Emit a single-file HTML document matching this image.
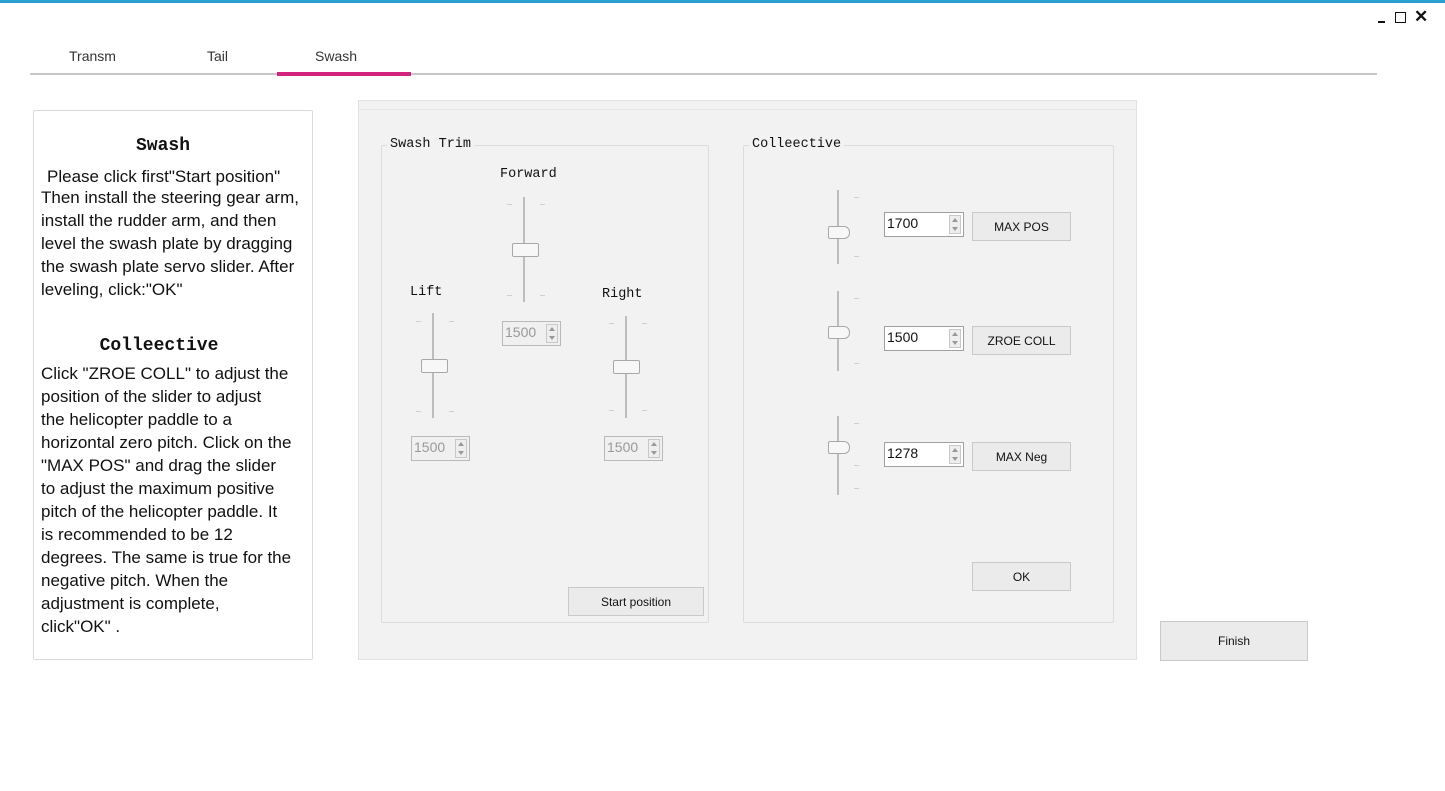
<!DOCTYPE html>
<html><head><style>
*{margin:0;padding:0;box-sizing:border-box}
body{width:1445px;height:791px;background:#fff;position:relative;overflow:hidden;font-family:"Liberation Sans",sans-serif}
.a{position:absolute}
.t{position:absolute;white-space:nowrap;font-size:17px;color:#111;left:41px}
.mono{font-family:"Liberation Mono",monospace;color:#111}
.grp{position:absolute;border:1px solid #dcdcdc;border-radius:2px}
.glbl{position:absolute;background:#f2f2f2;padding:0 3px;font-size:13.5px;top:-9px;left:5px}
.trk{position:absolute;width:2px;background:#bdbdbd}
.hnd{position:absolute;background:#f7f7f7;border:1px solid #a8a8a8;border-radius:2px}
.tick{position:absolute;width:5px;height:1px;background:#cfcfcf}
.spin{position:absolute;border:1px solid #b9b9b9;background:#f0f0f0;font-size:14px;color:#999;padding:2px 0 0 2px}
.spin.en{background:#fff;color:#111;border-color:#a0a0a0}
.arr{position:absolute;right:2px;top:2px;width:12px;bottom:2px;border:1px solid #c8c8c8;background:#eee}
.arr:before{content:"";position:absolute;left:2px;top:2px;border:3.5px solid transparent;border-bottom:4px solid #999;border-top:0}
.arr:after{content:"";position:absolute;left:2px;bottom:2px;border:3.5px solid transparent;border-top:4px solid #999;border-bottom:0}
.btn{position:absolute;background:#ebebeb;border:1px solid #c9c9c9;font-size:12px;color:#111;display:flex;align-items:center;justify-content:center}
</style></head><body>
<div class="a" style="left:0;top:0;width:1445px;height:3px;background:#2b9fd1"></div>
<div class="a" style="left:1378px;top:21px;width:7px;height:2px;background:#111"></div>
<div class="a" style="left:1395px;top:12px;width:11px;height:11px;border:1.5px solid #111"></div>
<div class="a" style="left:1414px;top:7px;font-size:17px;font-weight:bold;color:#111">✕</div>

<div class="a" style="left:69px;top:48px;font-size:14px;color:#333">Transm</div>
<div class="a" style="left:207px;top:48px;font-size:14px;color:#333">Tail</div>
<div class="a" style="left:315px;top:48px;font-size:14px;color:#333">Swash</div>
<div class="a" style="left:30px;top:73px;width:1347px;height:2px;background:#c8c8c8"></div>
<div class="a" style="left:277px;top:72px;width:134px;height:4px;background:#d3237f"></div>

<div class="a" style="left:33px;top:110px;width:280px;height:550px;border:1px solid #dadada;border-radius:2px"></div>
<div class="a mono" style="left:33px;width:260px;top:136px;text-align:center;font-size:18px;font-weight:bold">Swash</div>
<div class="t" style="top:167px;left:47px">Please click first"Start position"</div>
<div class="t" style="top:188px">Then install the steering gear arm,</div>
<div class="t" style="top:211px">install the rudder arm, and then</div>
<div class="t" style="top:234px">level the swash plate by dragging</div>
<div class="t" style="top:257px">the swash plate servo slider. After</div>
<div class="t" style="top:280px">leveling, click:"OK"</div>
<div class="a mono" style="left:33px;width:252px;top:336px;text-align:center;font-size:18px;font-weight:bold">Colleective</div>
<div class="t" style="top:364px">Click "ZROE COLL" to adjust the</div>
<div class="t" style="top:387px">position of the slider to adjust</div>
<div class="t" style="top:410px">the helicopter paddle to a</div>
<div class="t" style="top:433px">horizontal zero pitch. Click on the</div>
<div class="t" style="top:456px">"MAX POS" and drag the slider</div>
<div class="t" style="top:479px">to adjust the maximum positive</div>
<div class="t" style="top:502px">pitch of the helicopter paddle. It</div>
<div class="t" style="top:525px">is recommended to be 12</div>
<div class="t" style="top:548px">degrees. The same is true for the</div>
<div class="t" style="top:571px">negative pitch. When the</div>
<div class="t" style="top:594px">adjustment is complete,</div>
<div class="t" style="top:617px">click"OK" .</div>

<div class="a" style="left:358px;top:100px;width:779px;height:560px;background:#f2f2f2;border:1px solid #e2e2e2"></div>
<div class="a" style="left:358px;top:109px;width:779px;height:1px;background:#e6e6e6"></div>

<div class="grp" style="left:381px;top:145px;width:328px;height:478px"><span class="glbl mono">Swash Trim</span></div>
<div class="grp" style="left:743px;top:145px;width:371px;height:478px"><span class="glbl mono">Colleective</span></div>

<div class="a mono" style="left:500px;top:167px;font-size:13.5px">Forward</div>
<div class="a mono" style="left:410px;top:285px;font-size:13.5px">Lift</div>
<div class="a mono" style="left:602px;top:287px;font-size:13.5px">Right</div>

<div class="trk" style="left:523px;top:197px;height:105px"></div>
<div class="tick" style="left:507px;top:204px"></div><div class="tick" style="left:540px;top:204px"></div>
<div class="tick" style="left:507px;top:295px"></div><div class="tick" style="left:540px;top:295px"></div>
<div class="hnd" style="left:512px;top:243px;width:27px;height:14px"></div>
<div class="spin" style="left:502px;top:321px;width:59px;height:25px">1500<span class="arr"></span></div>

<div class="trk" style="left:432px;top:313px;height:105px"></div>
<div class="tick" style="left:416px;top:321px"></div><div class="tick" style="left:449px;top:321px"></div>
<div class="tick" style="left:416px;top:411px"></div><div class="tick" style="left:449px;top:411px"></div>
<div class="hnd" style="left:421px;top:359px;width:27px;height:14px"></div>
<div class="spin" style="left:411px;top:436px;width:59px;height:25px">1500<span class="arr"></span></div>

<div class="trk" style="left:625px;top:316px;height:102px"></div>
<div class="tick" style="left:609px;top:323px"></div><div class="tick" style="left:642px;top:323px"></div>
<div class="tick" style="left:609px;top:410px"></div><div class="tick" style="left:642px;top:410px"></div>
<div class="hnd" style="left:613px;top:360px;width:27px;height:14px"></div>
<div class="spin" style="left:604px;top:436px;width:59px;height:25px">1500<span class="arr"></span></div>

<div class="btn" style="left:568px;top:587px;width:136px;height:29px">Start position</div>

<div class="trk" style="left:837px;top:190px;height:74px"></div>
<div class="tick" style="left:854px;top:197px"></div><div class="tick" style="left:854px;top:256px"></div>
<div class="hnd" style="left:828px;top:226px;width:22px;height:13px;border-radius:2px 6px 6px 2px"></div>
<div class="spin en" style="left:884px;top:212px;width:80px;height:25px">1700<span class="arr"></span></div>
<div class="btn" style="left:972px;top:212px;width:99px;height:29px">MAX POS</div>

<div class="trk" style="left:837px;top:291px;height:80px"></div>
<div class="tick" style="left:854px;top:298px"></div><div class="tick" style="left:854px;top:363px"></div>
<div class="hnd" style="left:828px;top:326px;width:22px;height:13px;border-radius:2px 6px 6px 2px"></div>
<div class="spin en" style="left:884px;top:326px;width:80px;height:25px">1500<span class="arr"></span></div>
<div class="btn" style="left:972px;top:326px;width:99px;height:29px">ZROE COLL</div>

<div class="trk" style="left:837px;top:416px;height:79px"></div>
<div class="tick" style="left:854px;top:423px"></div><div class="tick" style="left:854px;top:465px"></div><div class="tick" style="left:854px;top:488px"></div>
<div class="hnd" style="left:828px;top:441px;width:22px;height:13px;border-radius:2px 6px 6px 2px"></div>
<div class="spin en" style="left:884px;top:442px;width:80px;height:25px">1278<span class="arr"></span></div>
<div class="btn" style="left:972px;top:442px;width:99px;height:29px">MAX Neg</div>

<div class="btn" style="left:972px;top:562px;width:99px;height:29px">OK</div>
<div class="btn" style="left:1160px;top:621px;width:148px;height:40px">Finish</div>
</body></html>
